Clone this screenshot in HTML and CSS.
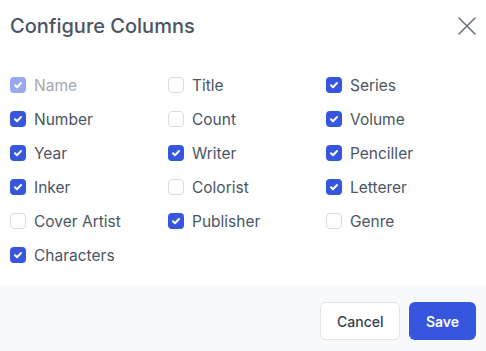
FILE: index.html
```html
<!DOCTYPE html>
<html>
    <head>
        <meta charset="utf-8">
        <title>Configure Columns</title>
        <link rel="stylesheet" href="styles.css">
    </head>
    <body>
        <div class="dialog">
            <div class="dialog-header">
                <h2 class="dialog-title">Configure Columns</h2>
                <button class="close-btn" aria-label="Close">
                    <svg width="20" height="20" viewBox="0 0 20 20"><path d="M2 2 L18 18 M18 2 L2 18" stroke="#6b7280" stroke-width="1.6" stroke-linecap="round" fill="none"/></svg>
                </button>
            </div>

            <div class="column-list">
                <label class="opt disabled"><span class="box checked"></span>Name</label>
                <label class="opt"><span class="box"></span>Title</label>
                <label class="opt"><span class="box checked"></span>Series</label>
                <label class="opt"><span class="box checked"></span>Number</label>
                <label class="opt"><span class="box"></span>Count</label>
                <label class="opt"><span class="box checked"></span>Volume</label>
                <label class="opt"><span class="box checked"></span>Year</label>
                <label class="opt"><span class="box checked"></span>Writer</label>
                <label class="opt"><span class="box checked"></span>Penciller</label>
                <label class="opt"><span class="box checked"></span>Inker</label>
                <label class="opt"><span class="box"></span>Colorist</label>
                <label class="opt"><span class="box checked"></span>Letterer</label>
                <label class="opt"><span class="box"></span>Cover Artist</label>
                <label class="opt"><span class="box checked"></span>Publisher</label>
                <label class="opt"><span class="box"></span>Genre</label>
                <label class="opt"><span class="box checked"></span>Characters</label>
            </div>

            <div class="dialog-footer">
                <button class="btn btn-cancel">Cancel</button>
                <button class="btn btn-save">Save</button>
            </div>
        </div>
    </body>
</html>
```

FILE: styles.css
```css
body {
    margin: 0;
    background: #fff;
    font-family: Inter, "Liberation Sans", sans-serif;
}
.dialog {
    width: 486px;
    height: 351px;
    display: flex;
    flex-direction: column;
}
.dialog-header {
    display: flex;
    justify-content: space-between;
    align-items: center;
    height: 52px;
    padding: 0 8px 0 10px;
}
.dialog-title {
    margin: 0;
    font-size: 20px;
    font-weight: 500;
    color: #4b5563;
}
.close-btn {
    border: 0;
    background: none;
    padding: 0;
    width: 22px;
    height: 22px;
    display: flex;
    align-items: center;
    justify-content: center;
}
.column-list {
    display: grid;
    grid-template-columns: 158px 158px 150px;
    row-gap: 10px;
    padding: 21px 10px 19px;
}
.opt {
    display: flex;
    align-items: center;
    height: 24px;
    font-size: 15.5px;
    color: #4b5563;
}
.box {
    box-sizing: border-box;
    width: 16px;
    height: 16px;
    margin-right: 8px;
    border: 1px solid #d9dce1;
    border-radius: 4px;
    background: #fff;
}
.box.checked {
    border: 0;
    background: #3656e0 url("data:image/svg+xml,%3Csvg xmlns='http://www.w3.org/2000/svg' viewBox='0 0 16 16'%3E%3Cpath d='M5 8.2 L7 10.2 L11 6' stroke='white' stroke-width='2' fill='none' stroke-linecap='round' stroke-linejoin='round'/%3E%3C/svg%3E") center / 16px 16px no-repeat;
}
.disabled {
    color: #a5a9b0;
}
.disabled .box {
    opacity: 0.5;
}
.dialog-footer {
    flex: 1;
    background: #f8f9fb;
    display: flex;
    justify-content: flex-end;
    align-items: flex-start;
    gap: 9px;
    padding: 16px 10px 0;
}
.btn {
    height: 38px;
    border-radius: 6px;
    font-family: Inter, "Liberation Sans", sans-serif;
    font-size: 14px;
    font-weight: 500;
    padding: 0 16px;
}
.btn-cancel {
    width: 80px;
    background: #fff;
    border: 1px solid #e3e5e8;
    color: #374151;
}
.btn-save {
    width: 67px;
    background: #3656e0;
    border: 0;
    color: #fff;
    font-weight: 600;
}
```
